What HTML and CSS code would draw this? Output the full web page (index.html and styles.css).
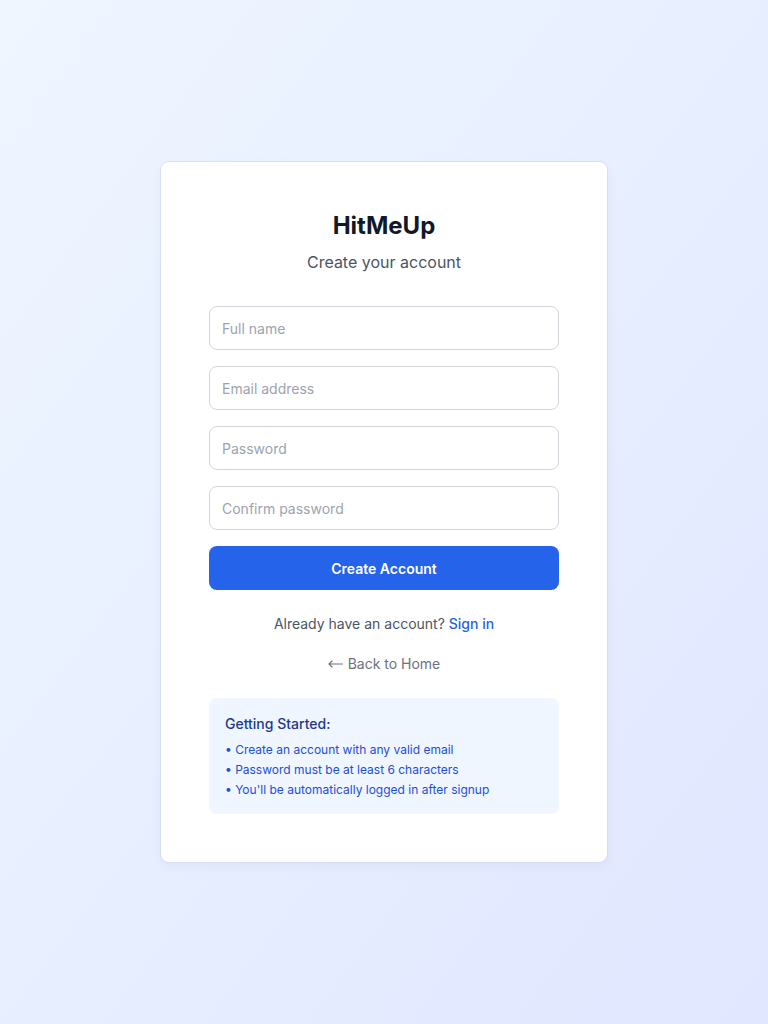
FILE: index.html
```html
<!doctype html>
<html lang="en">
  <head>
    <meta charset="UTF-8" />
    <meta name="viewport" content="width=device-width, initial-scale=1.0" />
    <title>HitMeUp - Sign up</title>
    <link rel="stylesheet" href="styles.css">
  </head>
  <body>
    <main class="page">
      <div class="card">
        <h1 class="brand">HitMeUp</h1>
        <p class="subtitle">Create your account</p>

        <form class="signup-form" onsubmit="return false">
          <input class="field" type="text" placeholder="Full name" />
          <input class="field" type="email" placeholder="Email address" />
          <input class="field" type="password" placeholder="Password" />
          <input class="field" type="password" placeholder="Confirm password" />
          <button class="submit" type="submit">Create Account</button>
        </form>

        <p class="signin">
          Already have an account? <a href="#" class="signin-link">Sign in</a>
        </p>
        <p class="back">
          <a href="#" class="back-link">
            <svg class="back-arrow" width="15" height="8" viewBox="0 0 15 8" fill="none" stroke="currentColor" stroke-width="1.1" stroke-linecap="round" stroke-linejoin="round">
              <path d="M14.5 4H1M4 1L1 4l3 3" />
            </svg>
            Back to Home
          </a>
        </p>

        <div class="info">
          <h3 class="info-title">Getting Started:</h3>
          <ul class="info-list">
            <li>• Create an account with any valid email</li>
            <li>• Password must be at least 6 characters</li>
            <li>• You'll be automatically logged in after signup</li>
          </ul>
        </div>
      </div>
    </main>
  </body>
</html>
```
FILE: styles.css
```css
* {
  box-sizing: border-box;
}
body {
  margin: 0;
  font-family: Inter, "Noto Sans", Arial, sans-serif;
  background: linear-gradient(to bottom right, #eff6ff, #e0e7ff);
  min-height: 100vh;
}
.page {
  min-height: 100vh;
  display: flex;
  align-items: center;
  justify-content: center;
}
.card {
  width: 446px;
  background: #fff;
  border-radius: 8px;
  box-shadow: 0 0 0 1px rgba(203, 213, 235, 0.55), 0 4px 12px rgba(30, 41, 80, 0.05);
  padding: 48px;
}
.brand {
  margin: 0;
  text-align: center;
  font-size: 24px;
  line-height: 32px;
  font-weight: 700;
  color: #111827;
}
.subtitle {
  margin: 8px 0 0;
  text-align: center;
  font-size: 16px;
  line-height: 24px;
  color: #4b5563;
}
.signup-form {
  margin-top: 32px;
  display: flex;
  flex-direction: column;
  gap: 16px;
}
.field {
  height: 44px;
  width: 100%;
  padding: 0 12px;
  border: 1px solid #d1d5db;
  border-radius: 8px;
  font-family: inherit;
  font-size: 14px;
  color: #111827;
  background: #fff;
  outline: none;
}
.field::placeholder {
  color: #9ca3af;
}
.submit {
  height: 44px;
  width: 100%;
  border: none;
  border-radius: 8px;
  background: #2563eb;
  color: #fff;
  font-family: inherit;
  font-size: 14px;
  font-weight: 600;
  cursor: pointer;
}
.submit:hover {
  background: #1d4ed8;
}
.signin {
  margin: 24px 0 0;
  text-align: center;
  font-size: 14px;
  line-height: 20px;
  color: #4b5563;
}
.signin-link {
  color: #2563eb;
  font-weight: 500;
  text-decoration: none;
}
.back {
  margin: 20px 0 0;
  text-align: center;
  font-size: 14px;
  line-height: 20px;
}
.back-link {
  color: #6b7280;
  text-decoration: none;
}
.back-arrow {
  vertical-align: 1px;
  margin-right: 1px;
}
.info {
  margin-top: 24px;
  padding: 16px;
  background: #eff6ff;
  border-radius: 8px;
}
.info-title {
  margin: 0;
  font-size: 14px;
  line-height: 20px;
  font-weight: 500;
  color: #1e3a8a;
}
.info-list {
  list-style: none;
  margin: 8px 0 0;
  padding: 0;
  display: flex;
  flex-direction: column;
  gap: 4px;
  font-size: 12px;
  line-height: 16px;
  color: #1d4ed8;
}
```
